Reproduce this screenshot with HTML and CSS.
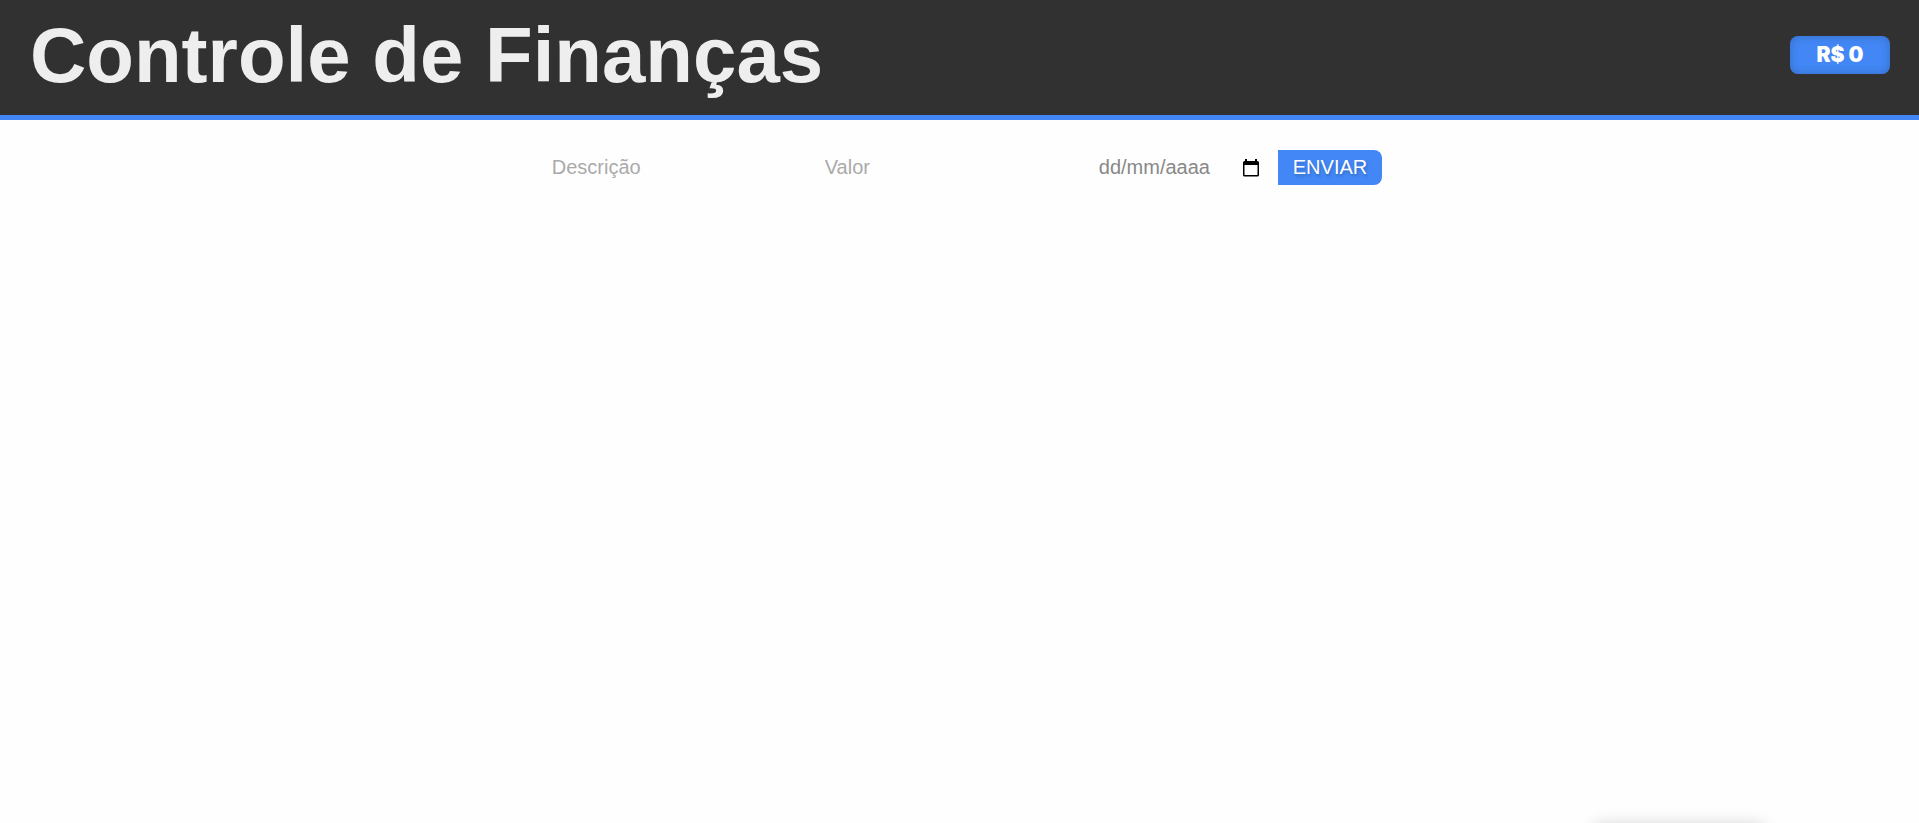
FILE: index.html
```html
<!DOCTYPE html>
<html lang="pt-BR">
<head>
  <meta charset="utf-8">
  <title>Controle de Finanças</title>
  <link rel="stylesheet" href="styles.css">
</head>
<body>
  <header class="header">
    <h1 class="title">Controle de Finanças</h1>
    <output class="balance">R$ 0</output>
  </header>
  <main>
    <form class="entry">
      <input class="field" type="text" placeholder="Descrição" aria-label="Descrição">
      <input class="field" type="text" placeholder="Valor" aria-label="Valor">
      <div class="date">
        <input class="date-text" type="text" placeholder="dd/mm/aaaa" aria-label="Data">
        <button class="picker" type="button" aria-label="Abrir calendário">
          <svg width="16" height="18" viewBox="0 0 16 18" aria-hidden="true">
            <path fill="#000" fill-rule="evenodd" d="M2 0h2v2h8V0h2v2h.4A1.600 1.600 0 0 1 16 3.600v12.400a1.600 1.600 0 0 1-1.600 1.600H1.600A1.600 1.600 0 0 1 0 16V3.600A1.600 1.600 0 0 1 1.600 2H2zM1.500 6v10h13V6z"/>
          </svg>
        </button>
      </div>
      <button class="send" type="submit">ENVIAR</button>
    </form>
  </main>
  <div class="toast" role="status"></div>
</body>
</html>
```
FILE: styles.css
```css
* {
  box-sizing: border-box;
  margin: 0;
  padding: 0;
}

html {
  overflow: hidden;
}

body {
  background: #fefefe;
  font-family: Arial, "Liberation Sans", sans-serif;
  font-size: 20px;
}

.header {
  display: flex;
  align-items: center;
  justify-content: space-between;
  padding: 9px 29px 14px 30px;
  background: #313131;
  border-bottom: 5px solid #4287f5;
}

.title {
  color: #eee;
  font-size: 78px;
  line-height: 92px;
}

.balance {
  min-width: 100px;
  padding: 5px 25px;
  border-radius: 8px;
  background: #4287f5;
  box-shadow: inset 0 0 10px rgba(0, 0, 0, 0.2);
  color: #fff;
  font-family: "Arial Black", Inter, sans-serif;
  font-size: 21px;
  font-weight: 900;
  line-height: 28px;
  text-align: center;
}

.entry {
  display: flex;
  justify-content: center;
  padding: 30px 0;
}

.field,
.date-text,
.send {
  border: 0;
  background: transparent;
  font: inherit;
  line-height: 23px;
}

.field {
  width: 273px;
  padding: 6px 15px;
}

.field::placeholder {
  color: #aaa;
}

.date {
  display: flex;
  align-items: center;
  width: 195px;
  padding: 0 19px 0 16px;
}

.date-text {
  flex: 1;
  min-width: 0;
  padding: 6px 0;
}

.date-text::placeholder {
  color: #888;
}

.picker {
  display: flex;
  border: 0;
  background: none;
}

.send {
  padding: 6px 15px;
  border-radius: 0 8px 8px 0;
  background: #4287f5;
  color: #fff;
  text-shadow: 1px 2px 3px rgba(0, 0, 0, 0.2);
}

.toast {
  position: fixed;
  top: 100%;
  right: 154px;
  width: 172px;
  height: 60px;
  border-radius: 8px;
  box-shadow: 0 0 15px rgba(0, 0, 0, 0.15);
}
```
